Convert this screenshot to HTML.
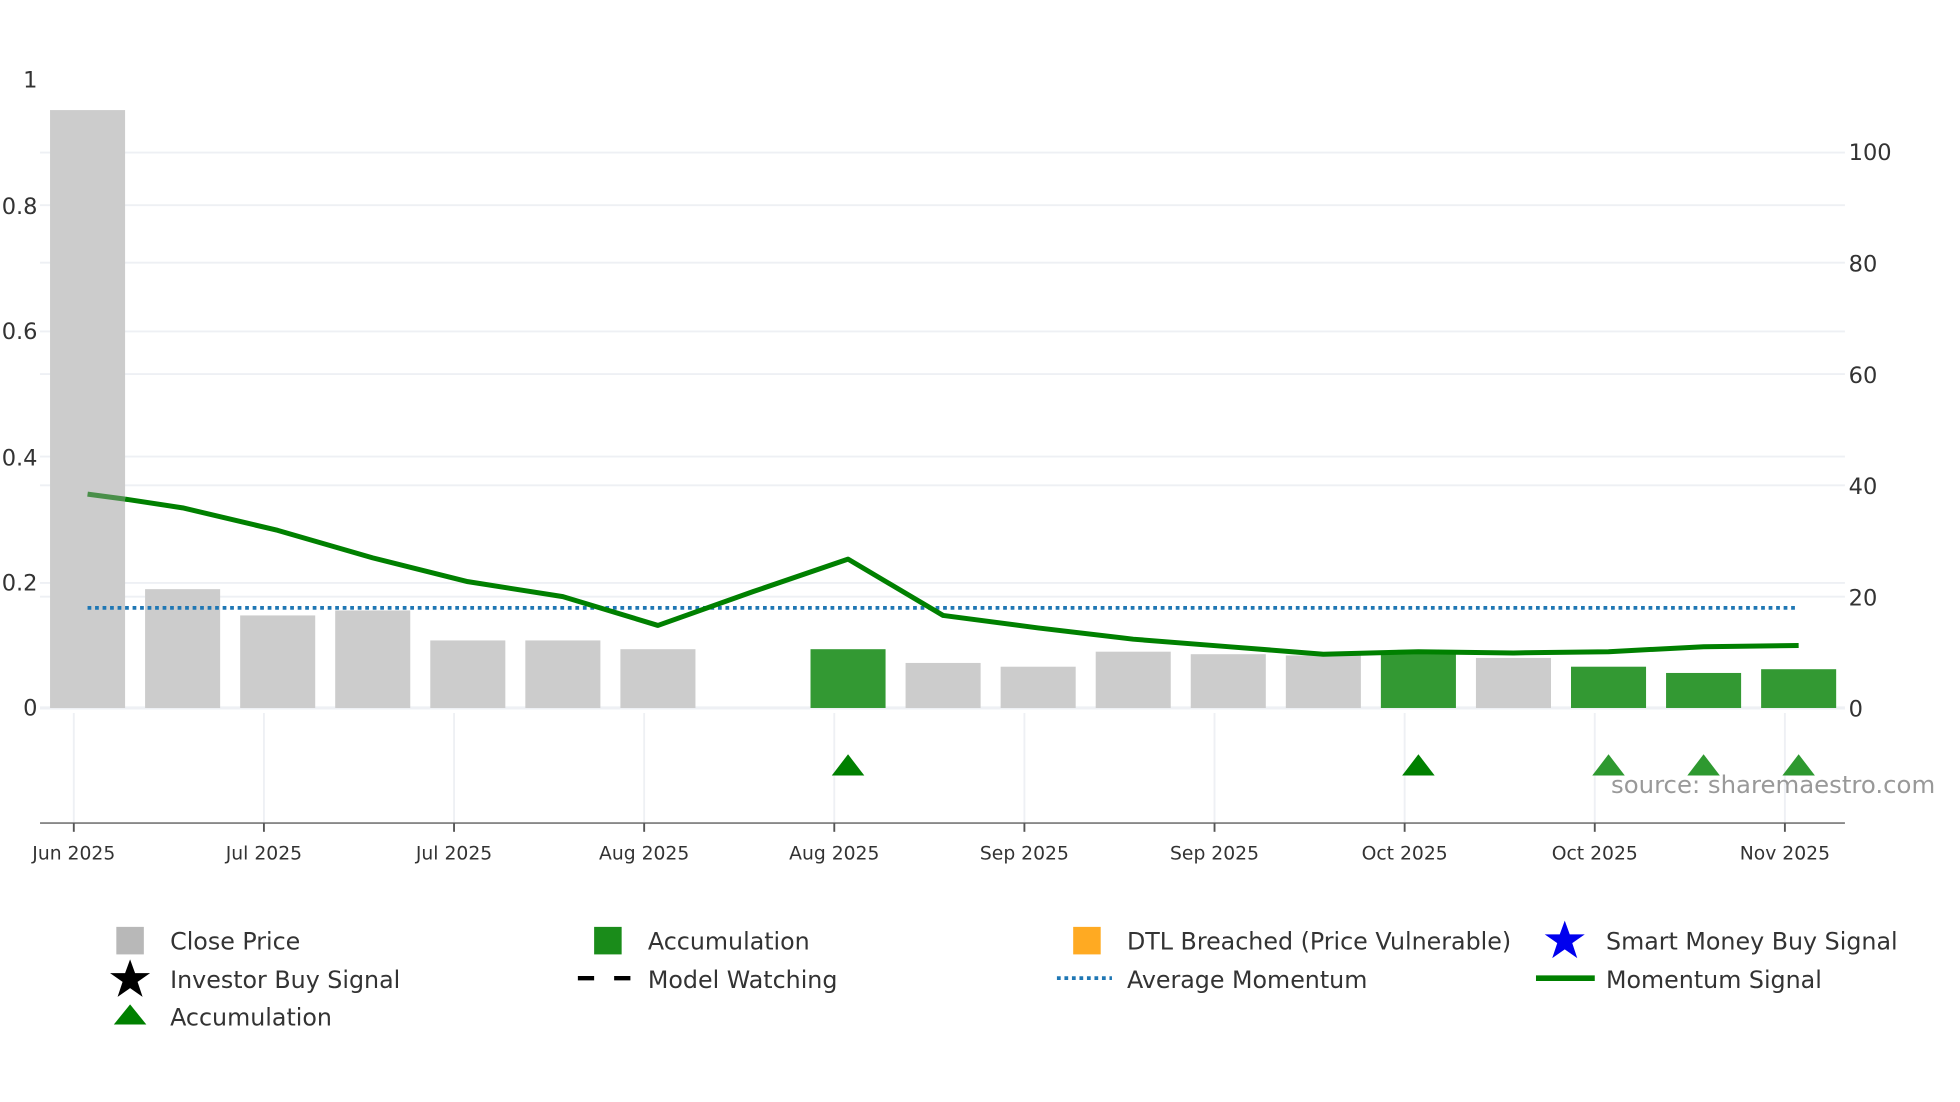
<!DOCTYPE html>
<html><head><meta charset="utf-8"><style>
html,body{margin:0;padding:0;background:#fff;}
svg{display:block;font-family:"DejaVu Sans","Liberation Sans",sans-serif;}
</style></head><body>
<svg width="1960" height="1102" viewBox="0 0 1567 881" preserveAspectRatio="none" xmlns="http://www.w3.org/2000/svg">
<rect width="1567" height="881" fill="#fff"/>
<g stroke="#eef0f4" stroke-width="1.5">
<line x1="32" x2="1475" y1="122" y2="122"/><line x1="32" x2="1475" y1="164" y2="164"/>
<line x1="32" x2="1475" y1="210" y2="210"/><line x1="32" x2="1475" y1="265" y2="265"/>
<line x1="32" x2="1475" y1="299" y2="299"/><line x1="32" x2="1475" y1="365" y2="365"/>
<line x1="32" x2="1475" y1="388" y2="388"/><line x1="32" x2="1475" y1="466" y2="466"/>
<line x1="32" x2="1475" y1="477" y2="477"/><line x1="32" x2="1475" y1="566" y2="566" stroke-width="2.5"/>
<line x1="59" x2="59" y1="570" y2="658"/><line x1="211" x2="211" y1="570" y2="658"/>
<line x1="363" x2="363" y1="570" y2="658"/><line x1="515" x2="515" y1="570" y2="658"/>
<line x1="667" x2="667" y1="570" y2="658"/><line x1="819" x2="819" y1="570" y2="658"/>
<line x1="971" x2="971" y1="570" y2="658"/><line x1="1123" x2="1123" y1="570" y2="658"/>
<line x1="1275" x2="1275" y1="570" y2="658"/><line x1="1427" x2="1427" y1="570" y2="658"/>
</g>
<g fill="#cccccc">
<rect x="40" y="88" width="60" height="478"/><rect x="116" y="471" width="60" height="95"/>
<rect x="192" y="492" width="60" height="74"/><rect x="268" y="488" width="60" height="78"/>
<rect x="344" y="512" width="60" height="54"/><rect x="420" y="512" width="60" height="54"/>
<rect x="496" y="519" width="60" height="47"/><rect x="724" y="530" width="60" height="36"/>
<rect x="800" y="533" width="60" height="33"/><rect x="876" y="521" width="60" height="45"/>
<rect x="952" y="523" width="60" height="43"/><rect x="1028" y="524" width="60" height="42"/>
<rect x="1180" y="526" width="60" height="40"/>
</g>
<g fill="#339933">
<rect x="648" y="519" width="60" height="47"/><rect x="1104" y="522" width="60" height="44"/>
<rect x="1256" y="533" width="60" height="33"/><rect x="1332" y="538" width="60" height="28"/>
<rect x="1408" y="535" width="60" height="31"/>
</g>
<line x1="70" x2="1438" y1="486" y2="486" stroke="#1f77b4" stroke-width="3" stroke-dasharray="3,3"/>
<line x1="70" y1="395" x2="100" y2="399" stroke="#4a8f4a" stroke-width="4"/>
<polyline fill="none" stroke="#008000" stroke-width="4" stroke-linejoin="round" points="100,399 146,406 222,424 298,446 374,465 450,477 526,500 602,473 678,447 754,492 830,502 906,511 982,517 1058,523 1134,521 1210,522 1286,521 1362,517 1438,516"/>
<g fill="#008000">
<polygon points="665,620 678,603 691,620"/><polygon points="1121,620 1134,603 1147,620"/>
</g>
<g fill="#2e9930">
<polygon points="1273,620 1286,603 1299,620"/><polygon points="1349,620 1362,603 1375,620"/><polygon points="1425,620 1438,603 1451,620"/>
</g>
<line x1="32" x2="1475" y1="658" y2="658" stroke="#888" stroke-width="1.5"/>
<g stroke="#555" stroke-width="1.5">
<line x1="59" x2="59" y1="658" y2="665"/><line x1="211" x2="211" y1="658" y2="665"/>
<line x1="363" x2="363" y1="658" y2="665"/><line x1="515" x2="515" y1="658" y2="665"/>
<line x1="667" x2="667" y1="658" y2="665"/><line x1="819" x2="819" y1="658" y2="665"/>
<line x1="971" x2="971" y1="658" y2="665"/><line x1="1123" x2="1123" y1="658" y2="665"/>
<line x1="1275" x2="1275" y1="658" y2="665"/><line x1="1427" x2="1427" y1="658" y2="665"/>
</g>
<text x="1288" y="634" font-size="19.5" fill="#999">source: sharemaestro.com</text>
<g font-size="15" fill="#333" text-anchor="middle">
<text x="59" y="687">Jun 2025</text><text x="211" y="687">Jul 2025</text><text x="363" y="687">Jul 2025</text>
<text x="515" y="687">Aug 2025</text><text x="667" y="687">Aug 2025</text><text x="819" y="687">Sep 2025</text>
<text x="971" y="687">Sep 2025</text><text x="1123" y="687">Oct 2025</text><text x="1275" y="687">Oct 2025</text>
<text x="1427" y="687">Nov 2025</text>
</g>
<g font-size="18" fill="#333" text-anchor="end">
<text x="30" y="70">1</text><text x="30" y="171">0.8</text><text x="30" y="271">0.6</text>
<text x="30" y="372">0.4</text><text x="30" y="472">0.2</text><text x="30" y="572">0</text>
</g>
<g font-size="18" fill="#333">
<text x="1478" y="128">100</text><text x="1478" y="217">80</text><text x="1478" y="306">60</text>
<text x="1478" y="395">40</text><text x="1478" y="484">20</text><text x="1478" y="573">0</text>
</g>
<g font-size="19" fill="#333">
<text x="136" y="759">Close Price</text><text x="518" y="759">Accumulation</text>
<text x="901" y="759">DTL Breached (Price Vulnerable)</text><text x="1284" y="759">Smart Money Buy Signal</text>
<text x="136" y="790">Investor Buy Signal</text><text x="518" y="790">Model Watching</text>
<text x="901" y="790">Average Momentum</text><text x="1284" y="790">Momentum Signal</text>
<text x="136" y="820">Accumulation</text>
</g>
<rect x="93" y="741" width="22" height="22" fill="#b8b8b8"/>
<rect x="475" y="741" width="22" height="22" fill="#1a8c1a"/>
<rect x="858" y="741" width="22" height="22" fill="#ffaa22"/>
<polygon fill="#0000ee" points="1251,736 1255,747 1267,747 1257,754 1261,766 1251,759 1241,766 1245,754 1235,747 1247,747"/>
<polygon fill="#000" points="104,767 108,778 120,778 110,785 114,797 104,790 94,797 98,785 88,778 100,778"/>
<line x1="462" x2="506" y1="782" y2="782" stroke="#000" stroke-width="3.5" stroke-dasharray="13,16"/>
<line x1="845" x2="889" y1="782" y2="782" stroke="#1f77b4" stroke-width="3" stroke-dasharray="3,3"/>
<line x1="1228" x2="1275" y1="782" y2="782" stroke="#008000" stroke-width="4.5"/>
<polygon fill="#008000" points="91,819 104,803 117,819"/>
</svg>
</body></html>
